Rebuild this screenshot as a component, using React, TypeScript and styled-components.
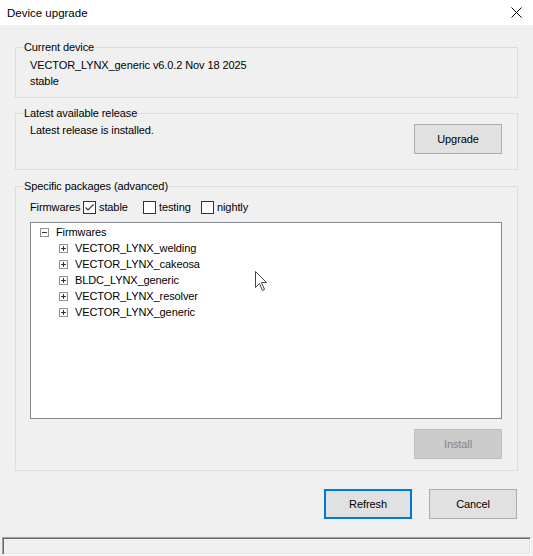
import React from "react";
import styled, { createGlobalStyle } from "styled-components";

const Global = createGlobalStyle`
  html, body { margin: 0; padding: 0; background: #f0f0f0; }
  * { box-sizing: border-box; }
`;

const Window = styled.div`
  position: relative;
  width: 533px;
  height: 556px;
  overflow: hidden;
  display: flex;
  flex-direction: column;
  background: #f0f0f0;
  font-family: "Liberation Sans", Arial, sans-serif;
  font-size: 11px;
  letter-spacing: -0.1px;
  color: #000;
`;

const TitleBar = styled.div`
  height: 25px;
  flex-shrink: 0;
  background: #fff;
  display: flex;
  align-items: center;
  justify-content: space-between;
  padding: 0 11px 0 7px;
  font-size: 11.5px;
  letter-spacing: 0;
`;

const Body = styled.div`
  display: flex;
  flex-direction: column;
  padding: 16px 15px 0 15px;
`;

const Group = styled.fieldset<{ $mt: number }>`
  margin: ${(p) => p.$mt}px 0 0 0;
  padding: 0;
  min-width: 0;
  border: 1px solid #dcdcdc;
`;

const Legend = styled.legend`
  margin-left: 7px;
  padding: 0 1px;
  line-height: 13px;
  font-size: 11px;
`;

const GroupContent = styled.div<{ $pt: number; $pb: number }>`
  padding: ${(p) => p.$pt}px 15px ${(p) => p.$pb}px 14px;
  display: flex;
  flex-direction: column;
`;

const InfoLine = styled.div`
  line-height: 16px;
`;

const ReleaseRow = styled.div`
  display: flex;
  justify-content: space-between;
  align-items: flex-start;
`;

const ReleaseText = styled.div`
  line-height: 12px;
`;

const Button = styled.button<{ $focused?: boolean }>`
  width: 88px;
  height: 30px;
  padding: 0;
  font-family: "Liberation Sans", Arial, sans-serif;
  font-size: 11px;
  letter-spacing: -0.1px;
  color: ${(p) => (p.disabled ? "#838383" : "#000")};
  background: ${(p) => (p.disabled ? "#cccccc" : "#e1e1e1")};
  border: ${(p) =>
    p.$focused ? "2px solid #0078d7" : p.disabled ? "1px solid #bfbfbf" : "1px solid #adadad"};
  outline: none;
  cursor: default;
`;

const FilterRow = styled.div`
  display: flex;
  align-items: center;
  height: 13px;
  line-height: 13px;
`;

const FilterLabel = styled.span`
  width: 53px;
  flex-shrink: 0;
`;

const CheckItem = styled.label<{ $w: number }>`
  width: ${(p) => p.$w}px;
  flex-shrink: 0;
  display: flex;
  align-items: center;
`;

const CheckBox = styled.span`
  width: 13px;
  height: 13px;
  flex-shrink: 0;
  border: 1px solid #333;
  background: #fff;
  display: flex;
  align-items: center;
  justify-content: center;
`;

const CheckText = styled.span`
  margin-left: 3px;
`;

const Tree = styled.div`
  margin-top: 8px;
  height: 197px;
  background: #fff;
  border: 1px solid #828790;
  padding-top: 1px;
  display: flex;
  flex-direction: column;
`;

const TreeRow = styled.div<{ $indent: number }>`
  height: 16px;
  display: flex;
  align-items: center;
  padding-left: ${(p) => p.$indent}px;
`;

const TreeLabel = styled.span`
  margin-left: 7px;
  line-height: 16px;
`;

const InstallRow = styled.div`
  margin-top: 10px;
  display: flex;
  justify-content: flex-end;
`;

const DialogButtons = styled.div`
  margin-top: 18px;
  padding-right: 1px;
  display: flex;
  justify-content: flex-end;
  gap: 17px;
`;

const StatusBar = styled.div`
  margin: 18px 2px 0 2px;
  height: 18px;
  border: 1px solid;
  border-color: #a0a0a0 #ffffff #ffffff #a0a0a0;
  box-shadow: inset 1px 1px 0 #696969, inset -1px -1px 0 #e3e3e3;
`;

const Cursor = styled.svg`
  position: absolute;
  left: 255px;
  top: 271px;
  pointer-events: none;
`;

const Expander = ({ open }: { open?: boolean }) => (
  <svg width="9" height="9" viewBox="0 0 9 9" style={{ flexShrink: 0 }}>
    <rect x="0.5" y="0.5" width="8" height="8" fill="#fff" stroke="#919191" />
    <line x1="2" y1="4.5" x2="7" y2="4.5" stroke="#333" />
    {!open && <line x1="4.5" y1="2" x2="4.5" y2="7" stroke="#333" />}
  </svg>
);

const Check = () => (
  <svg width="11" height="11" viewBox="0 0 11 11">
    <polyline points="1.5,5.5 4,8 9.5,2.5" fill="none" stroke="#333" strokeWidth="1.1" />
  </svg>
);

const firmwares = [
  "VECTOR_LYNX_welding",
  "VECTOR_LYNX_cakeosa",
  "BLDC_LYNX_generic",
  "VECTOR_LYNX_resolver",
  "VECTOR_LYNX_generic",
];

export default function App() {
  return (
    <>
      <Global />
      <Window>
        <TitleBar>
          <span>Device upgrade</span>
          <svg width="11" height="11" viewBox="0 0 11 11">
            <path d="M0.5 0.5 L10.5 10.5 M10.5 0.5 L0.5 10.5" stroke="#000" strokeWidth="1" />
          </svg>
        </TitleBar>
        <Body>
          <Group $mt={0}>
            <Legend>Current device</Legend>
            <GroupContent $pt={3} $pb={8}>
              <InfoLine>VECTOR_LYNX_generic v6.0.2 Nov 18 2025</InfoLine>
              <InfoLine>stable</InfoLine>
            </GroupContent>
          </Group>

          <Group $mt={9}>
            <Legend>Latest available release</Legend>
            <GroupContent $pt={4} $pb={15}>
              <ReleaseRow>
                <ReleaseText>Latest release is installed.</ReleaseText>
                <Button>Upgrade</Button>
              </ReleaseRow>
            </GroupContent>
          </Group>

          <Group $mt={10}>
            <Legend>Specific packages (advanced)</Legend>
            <GroupContent $pt={8} $pb={11}>
              <FilterRow>
                <FilterLabel>Firmwares</FilterLabel>
                <CheckItem $w={60}>
                  <CheckBox>
                    <Check />
                  </CheckBox>
                  <CheckText>stable</CheckText>
                </CheckItem>
                <CheckItem $w={58}>
                  <CheckBox />
                  <CheckText>testing</CheckText>
                </CheckItem>
                <CheckItem $w={60}>
                  <CheckBox />
                  <CheckText>nightly</CheckText>
                </CheckItem>
              </FilterRow>
              <Tree>
                <TreeRow $indent={9}>
                  <Expander open />
                  <TreeLabel>Firmwares</TreeLabel>
                </TreeRow>
                {firmwares.map((f) => (
                  <TreeRow $indent={28} key={f}>
                    <Expander />
                    <TreeLabel>{f}</TreeLabel>
                  </TreeRow>
                ))}
              </Tree>
              <InstallRow>
                <Button disabled>Install</Button>
              </InstallRow>
            </GroupContent>
          </Group>

          <DialogButtons>
            <Button $focused>Refresh</Button>
            <Button>Cancel</Button>
          </DialogButtons>
        </Body>
        <StatusBar />
        <Cursor width="13" height="21" viewBox="0 0 13 21">
          <path
            d="M0.5 0.5 L0.5 16.5 L4.5 12.5 L7.5 19.5 L9.5 18.5 L6.5 11.5 L11.5 11.5 Z"
            fill="#fff"
            stroke="#444"
            strokeWidth="1"
          />
        </Cursor>
      </Window>
    </>
  );
}
